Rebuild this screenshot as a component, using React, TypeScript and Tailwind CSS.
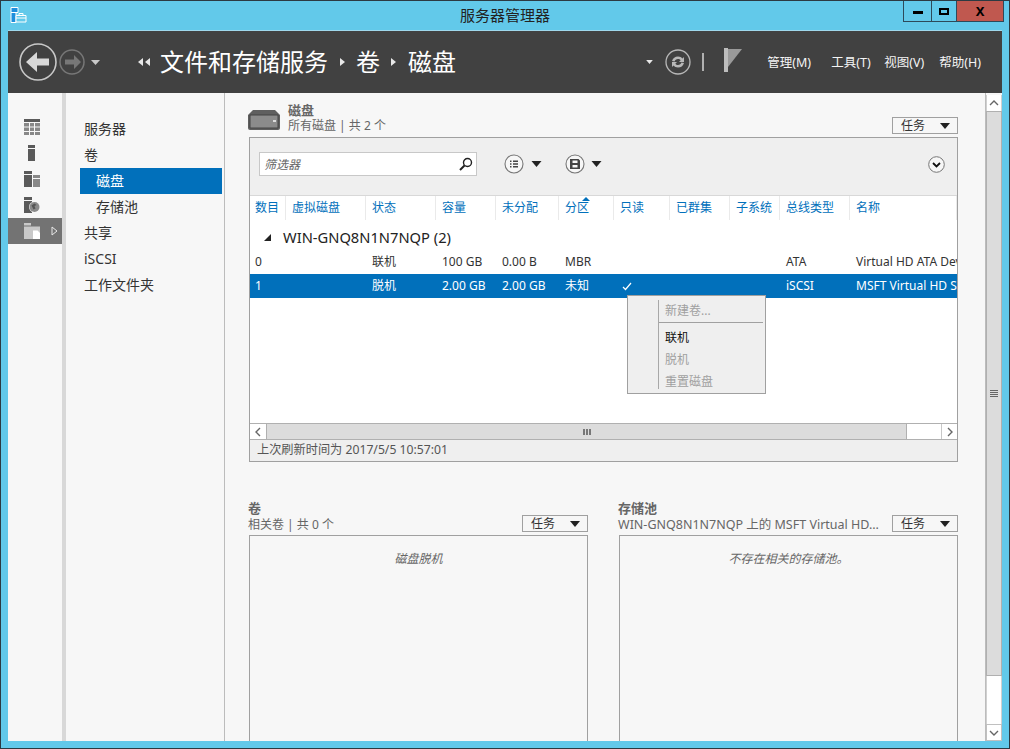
import type { ReactNode } from "react";

const font = { fontFamily: '"Noto Sans", "Noto Sans CJK SC", sans-serif' };

const navItems = [
  { label: "服务器" },
  { label: "卷" },
  { label: "磁盘", sub: true, active: true },
  { label: "存储池", sub: true },
  { label: "共享" },
  { label: "iSCSI" },
  { label: "工作文件夹" },
];

const columns = ["数目", "虚拟磁盘", "状态", "容量", "未分配", "分区", "只读", "已群集", "子系统", "总线类型", "名称"];

const rows = [
  ["0", "", "联机", "100 GB", "0.00 B", "MBR", "", "", "", "ATA", "Virtual HD ATA Device"],
  ["1", "", "脱机", "2.00 GB", "2.00 GB", "未知", "✓", "", "", "iSCSI", "MSFT Virtual HD SCSI Disk Device"],
];

const gridCols = "grid grid-cols-[36px_80px_70px_60px_63px_55px_56px_60px_50px_70px_107px]";

function Triangle({ className }: { className?: string }) {
  return (
    <svg width="10" height="6" viewBox="0 0 10 6" className={className}>
      <path d="M0 0h10L5 6z" fill="currentColor" />
    </svg>
  );
}

function TaskButton() {
  return (
    <div className="flex h-[17px] w-[66px] shrink-0 items-center justify-between border border-[#a0a0a0] bg-[#f7f7f7] pl-[8px] pr-[7px] text-[12px] leading-none text-[#333]">
      <span className="pt-[1px]">任务</span>
      <Triangle className="text-[#222]" />
    </div>
  );
}

function RailIcon({ index }: { index: number }) {
  const c = "#5a5a5a";
  const c2 = "#888";
  if (index === 0)
    return (
      <svg width="16" height="16" viewBox="0 0 16 16">
        <path d="M0 0h16v3H0z" fill={c} />
        <path d="M0 4h5v3.5H0zM6 4h4v3.5H6zM11 4h5v3.5h-5zM0 8.5h5V12H0zM6 8.5h4V12H6zM11 8.5h5V12h-5zM0 13h5v3H0zM6 13h4v3H6zM11 13h5v3h-5z" fill={c2} />
      </svg>
    );
  if (index === 1)
    return (
      <svg width="16" height="16" viewBox="0 0 16 16">
        <path d="M4 0h7v3H4z" fill={c} />
        <path d="M4 4h7v12H4z" fill={c} />
      </svg>
    );
  if (index === 2)
    return (
      <svg width="16" height="16" viewBox="0 0 16 16">
        <path d="M0 0h8v3H0zM0 4h8v12H0z" fill={c} />
        <path d="M9 4h7v3H9zM9 8h7v8H9z" fill={c2} />
      </svg>
    );
  if (index === 3)
    return (
      <svg width="16" height="16" viewBox="0 0 16 16">
        <path d="M0 0h8v3H0zM0 4h8v12H0z" fill={c} />
        <circle cx="10.5" cy="10" r="5.5" fill="#f7f7f7" />
        <circle cx="10.5" cy="10" r="5" fill="#8a8a8a" />
        <path d="M7.5 8.5l3-2 2 1.5-2 1 1 2.5-2 1-1-2z" fill="#555" />
      </svg>
    );
  return (
    <svg width="16" height="16" viewBox="0 0 16 16">
      <path d="M0 0h7v2.5H0zM0 3.5h16V16H0z" fill="#c8c8c8" />
      <path d="M9 7.5h4.5L16 10v6H9z" fill="#fff" />
    </svg>
  );
}

function CircleBtn({ children, size = 20 }: { children: ReactNode; size?: number }) {
  return (
    <svg width={size} height={size} viewBox="0 0 20 20">
      <circle cx="10" cy="10" r="9" fill="#f7f7f7" stroke="#777" strokeWidth="1.1" />
      {children}
    </svg>
  );
}

function ScrollChevron({ dir }: { dir: "up" | "down" | "left" | "right" }) {
  const d = {
    up: "M1 6l4-4 4 4",
    down: "M1 2l4 4 4-4",
    left: "M7 1L3 5l4 4",
    right: "M3 1l4 4-4 4",
  }[dir];
  const box = dir === "up" || dir === "down" ? "0 0 10 8" : "0 0 10 10";
  return (
    <svg width="10" height={dir === "up" || dir === "down" ? 8 : 10} viewBox={box}>
      <path d={d} fill="none" stroke="#666" strokeWidth="1.4" />
    </svg>
  );
}

function Header() {
  return (
    <div className="flex h-[62px] shrink-0 items-center bg-[#414141] text-white">
      <svg width="94" height="40" viewBox="0 0 94 40" className="ml-[10px] shrink-0">
        <circle cx="20" cy="20" r="18" fill="none" stroke="#c8c8c8" strokeWidth="1.6" />
        <path d="M8 20L19 10v6.5h12v7H19V30z" fill="#d8d8d8" />
        <circle cx="54" cy="20" r="12" fill="none" stroke="#777" strokeWidth="1.5" />
        <path d="M63 20l-7-7v4.5h-9v5h9V27z" fill="#777" />
        <path d="M73 18h9l-4.5 5z" fill="#c8c8c8" />
      </svg>
      <div className="ml-[26px] flex items-center">
        <svg width="12" height="8" viewBox="0 0 12 8" className="mr-[10px]">
          <path d="M5 0v8L0 4zM12 0v8L7 4z" fill="#e8e8e8" />
        </svg>
        <span className="text-[24px] leading-none">文件和存储服务</span>
        <svg width="5" height="8" viewBox="0 0 5 8" className="ml-[12px] mr-[11px]">
          <path d="M0 0v8l5-4z" fill="#e8e8e8" />
        </svg>
        <span className="text-[24px] leading-none">卷</span>
        <svg width="5" height="8" viewBox="0 0 5 8" className="ml-[11px] mr-[12px]">
          <path d="M0 0v8l5-4z" fill="#e8e8e8" />
        </svg>
        <span className="text-[24px] leading-none">磁盘</span>
      </div>
      <div className="ml-auto flex items-center pr-[21px]">
        <Triangle className="mr-[12px] h-[4px] w-[7px] text-[#e8e8e8]" />
        <svg width="26" height="26" viewBox="0 0 26 26" className="mr-[11px]">
          <circle cx="13" cy="13" r="12" fill="none" stroke="#b8b8b8" strokeWidth="1.3" />
          <path d="M7 12c1-3 3-4.5 6-4.5 2 0 3.5.8 4.5 2l1.5-1.5v5h-5l1.7-1.7c-.7-.8-1.6-1.3-2.7-1.3-1.7 0-3 1-3.4 2.5zM19 14c-1 3-3 4.5-6 4.5-2 0-3.5-.8-4.5-2L7 18v-5h5l-1.7 1.7c.7.8 1.6 1.3 2.7 1.3 1.7 0 3-1 3.4-2.5z" fill="#b8b8b8" />
        </svg>
        <div className="mr-[20px] h-[18px] w-[2px] bg-[#b0b0b0]" />
        <svg width="18" height="24" viewBox="0 0 18 24" className="mb-[4px] mr-[25px]">
          <path d="M0 0h4v24H0z" fill="#bdbdbd" />
          <path d="M4 1h14L4 19z" fill="#9a9a9a" />
        </svg>
        <div className="flex items-center pt-[2px] text-[12.5px] leading-none text-[#f4f4f4]">
          <span className="w-[64px]">管理(M)</span>
          <span className="w-[53px]">工具(T)</span>
          <span className="w-[55px]">视图(V)</span>
          <span>帮助(H)</span>
        </div>
      </div>
    </div>
  );
}

function Rail() {
  return (
    <div className="flex w-[54px] shrink-0 flex-col bg-[#f7f7f7] pt-[21px]">
      {[0, 1, 2, 3, 4].map((i) => (
        <div key={i} className={`flex h-[26px] items-center pl-[16px] ${i === 4 ? "bg-[#737373]" : ""}`}>
          <RailIcon index={i} />
          {i === 4 && (
            <svg width="7" height="10" viewBox="0 0 7 10" className="ml-[11px]">
              <path d="M1 1l5 4-5 4z" fill="none" stroke="#e8e8e8" strokeWidth="1" />
            </svg>
          )}
        </div>
      ))}
    </div>
  );
}

function Nav() {
  return (
    <div className="flex w-[159px] shrink-0 flex-col border-r border-[#bcbcbc] bg-[#f7f7f7] pl-[14px] pr-[2px] pt-[23px]">
      {navItems.map((item) => (
        <div
          key={item.label}
          className={`flex h-[26px] items-center text-[14px] leading-none ${item.sub ? "pl-[16px]" : "pl-[4px]"} ${
            item.active ? "bg-[#0170bb] text-white" : "text-[#333]"
          }`}
        >
          {item.label}
        </div>
      ))}
    </div>
  );
}

function ContextMenu() {
  const disabled = "flex h-[22px] items-center pl-[6px] text-[#a0a0a0]";
  return (
    <div className="absolute left-[377px] top-[157px] flex h-[99px] w-[139px] border border-[#a0a0a0] bg-[#efefef] py-[4px] text-[12px] leading-none">
      <div className="w-[31px] shrink-0 border-r border-[#a8a8a8]" />
      <div className="flex-1 pr-[2px]">
        <div className="flex h-[22px] items-center pl-[6px] text-[#a0a0a0]">新建卷...</div>
        <div className="mb-[4px] border-b border-[#a0a0a0]" />
        <div className="flex h-[22px] items-center pl-[6px] text-[#111]">联机</div>
        <div className={disabled}>脱机</div>
        <div className={disabled}>重置磁盘</div>
      </div>
    </div>
  );
}

function DiskTable() {
  return (
    <div className="relative flex h-[325px] flex-col border border-[#a0a0a0] bg-white">
      <div className="flex h-[57px] shrink-0 items-center bg-[#efefef] pb-[5px] pl-[9px] pr-[12px]">
        <div className="flex h-[24px] w-[218px] items-center justify-between border border-[#c8c8c8] bg-white pl-[4px] pr-[3px] text-[12px] italic leading-none text-[#666]">
          <span className="pt-[1px]">筛选器</span>
          <svg width="14" height="14" viewBox="0 0 14 14">
            <circle cx="8.5" cy="5.5" r="4" fill="none" stroke="#222" strokeWidth="1.4" />
            <path d="M5.5 8.5L1 13" stroke="#222" strokeWidth="2" />
          </svg>
        </div>
        <div className="ml-[27px] flex items-center">
          <CircleBtn>
            <path d="M6 6.5h1.5V8H6zM6 9.3h1.5v1.5H6zM6 12h1.5v1.5H6zM9 6.5h5V8H9zM9 9.3h5v1.5H9zM9 12h5v1.5H9z" fill="#444" />
          </CircleBtn>
          <Triangle className="ml-[7px] h-[6px] w-[11px] text-[#222]" />
        </div>
        <div className="ml-[23px] flex items-center">
          <CircleBtn>
            <path d="M5 5h8.5L15 6.5V15H5zM7.5 6.5v2.5h5V6.5zM7.5 11v2.5h5V11z" fill="#444" fillRule="evenodd" />
          </CircleBtn>
          <Triangle className="ml-[6px] h-[6px] w-[11px] text-[#222]" />
        </div>
        <div className="ml-auto">
          <svg width="17" height="17" viewBox="0 0 17 17">
            <circle cx="8.5" cy="8.5" r="7.8" fill="#f7f7f7" stroke="#777" />
            <path d="M5 7l3.5 3.5L12 7" fill="none" stroke="#111" strokeWidth="1.8" />
          </svg>
        </div>
      </div>

      <div className={`${gridCols} relative h-[25px] shrink-0 border-t border-[#d8d8d8] text-[12px] leading-none text-[#0170bb]`}>
        {columns.map((c) => (
          <div key={c} className="flex items-center border-r border-[#eaeaea] pl-[6px] first:pl-[5px] last:border-r-0">
            {c}
          </div>
        ))}
        <svg width="8" height="4" viewBox="0 0 8 4" className="absolute left-[332px] top-[1px]">
          <path d="M4 0l4 4H0z" fill="#0170bb" />
        </svg>
      </div>

      <div className="flex h-[30px] shrink-0 items-end pb-[2px] pl-[14px] text-[14.7px] leading-[22px] text-[#222]">
        <svg width="7" height="7" viewBox="0 0 7 7" className="mb-[7px] mr-[12px]">
          <path d="M7 0v7H0z" fill="#222" />
        </svg>
        <span>WIN-GNQ8N1N7NQP (2)</span>
      </div>

      {rows.map((row, i) => (
        <div
          key={row[0]}
          className={`${gridCols} h-[24px] shrink-0 overflow-hidden whitespace-nowrap text-[12px] leading-none ${
            i === 1 ? "bg-[#0170bb] text-white" : "text-[#333]"
          }`}
        >
          {row.map((cell, j) => (
            <div key={j} className="flex items-center overflow-hidden pl-[6px] first:pl-[5px]">
              {cell === "✓" ? (
                <svg width="10" height="9" viewBox="0 0 10 9" className="ml-[2px]">
                  <path d="M1 5l2.5 2.5L9 1" fill="none" stroke="#fff" strokeWidth="1.2" />
                </svg>
              ) : (
                cell
              )}
            </div>
          ))}
        </div>
      ))}

      <div className="flex-1" />

      <div className="flex h-[17px] shrink-0 border-y border-[#b0b0b0] bg-[#dcdcdc]">
        <div className="flex w-[17px] items-center justify-center border-r border-[#b0b0b0] bg-white">
          <ScrollChevron dir="left" />
        </div>
        <div className="flex w-[640px] items-center justify-center border-r border-[#b0b0b0]">
          <div className="h-[6px] w-[8px] border-x-2 border-[#777] bg-[linear-gradient(90deg,#dcdcdc_35%,#777_35%,#777_65%,#dcdcdc_65%)]" />
        </div>
        <div className="flex-1 bg-white" />
        <div className="flex w-[16px] items-center justify-center border-l border-[#c8c8c8] bg-white">
          <ScrollChevron dir="right" />
        </div>
      </div>
      <div className="flex h-[21px] shrink-0 items-center bg-[#efefef] pl-[7px] text-[12.2px] leading-none text-[#555]">
        上次刷新时间为 2017/5/5 10:57:01
      </div>

      <ContextMenu />
    </div>
  );
}

function LowerPanel({ title, sub, empty, wide }: { title: string; sub: string; empty: string; wide?: boolean }) {
  return (
    <div className="flex min-w-0 flex-col">
      <div className="flex h-[35px] items-end justify-between gap-[8px] pb-[3px]">
        <div className="min-w-0 text-[#666]">
          <div className="text-[13px] font-bold leading-[17px]">{title}</div>
          <div className={`whitespace-nowrap leading-[15px] ${wide ? "text-[12.5px]" : "text-[12px]"}`}>{sub}</div>
        </div>
        <TaskButton />
      </div>
      <div className="ml-[1px] h-[260px] border border-[#a0a0a0] bg-[#f7f7f7] pt-[17px] text-center text-[12px] italic leading-none text-[#666]">
        {empty}
      </div>
    </div>
  );
}

function Scrollbar() {
  return (
    <div className="flex w-[17px] shrink-0 flex-col border-l border-[#bcbcbc] bg-[#f7f7f7] pt-[2px]">
      <div className="flex h-[16px] shrink-0 items-center justify-center border-x border-[#d0d0d0] bg-white">
        <ScrollChevron dir="up" />
      </div>
      <div className="flex h-[565px] shrink-0 flex-col items-center justify-center gap-[1px] border border-[#b0b0b0] bg-[#dcdcdc]">
        <div className="h-[1px] w-[8px] bg-[#666]" />
        <div className="h-[1px] w-[8px] bg-[#666]" />
        <div className="h-[1px] w-[8px] bg-[#666]" />
        <div className="h-[1px] w-[8px] bg-[#666]" />
      </div>
      <div className="flex-1 border-x border-[#d0d0d0] bg-white" />
      <div className="flex h-[17px] shrink-0 items-center justify-center border border-[#c0c0c0] bg-white">
        <ScrollChevron dir="down" />
      </div>
    </div>
  );
}

export default function App() {
  return (
    <div style={font} className="flex h-[749px] w-[1010px] flex-col overflow-hidden border border-[#2c3a42] bg-[#62c9ea]">
      <div className="grid h-[29px] shrink-0 grid-cols-[1fr_auto_1fr] items-start">
        <div className="pl-[9px] pt-[6px]">
          <svg width="17" height="16" viewBox="0 0 17 16">
            <path d="M1 .5h7v5H1zM1 5.5h5v10H1z" fill="#1e8fdc" stroke="#fff" strokeWidth="1" />
            <path d="M6 8.5h10v6.5H6z" fill="#62c9ea" stroke="#fff" strokeWidth="1" />
            <path d="M9 8.5V6.5h4v2M6 11h10" fill="none" stroke="#fff" strokeWidth="1" />
          </svg>
        </div>
        <div className="pt-[7px] text-[15px] leading-none text-[#222]">服务器管理器</div>
        <div className="flex justify-end pr-[5px]">
          <div className="flex h-[21px] border-x border-b border-[#2d4a5a]">
            <div className="flex w-[28px] items-center justify-center border-r border-[#2d4a5a]">
              <div className="mt-[3px] h-[3px] w-[10px] bg-black" />
            </div>
            <div className="flex w-[25px] items-center justify-center border-r border-[#2d4a5a]">
              <div className="h-[7px] w-[10px] border-2 border-black" />
            </div>
            <div className="flex w-[46px] items-center justify-center bg-[#c0584f] text-[13px] font-bold leading-none text-black">
              X
            </div>
          </div>
        </div>
      </div>

      <div className="mx-[7px] mb-[7px] flex min-h-0 flex-1 flex-col border-t border-[#9fd8ec]">
        <Header />
        <div className="flex min-h-0 flex-1">
          <Rail />
          <div className="w-[4px] shrink-0 bg-[#d8d8d8]" />
          <Nav />
          <div className="min-w-0 flex-1 overflow-hidden bg-[#f7f7f7] pl-[24px] pr-[27px]">
            <div className="flex h-[44px] items-end justify-between pb-[3px]">
              <div className="flex items-center">
                <svg width="32" height="20" viewBox="0 0 32 20" className="-ml-[1px] mr-[8px] mt-[3px]">
                  <path d="M5 0h22l5 5v13a2 2 0 0 1-2 2H2a2 2 0 0 1-2-2V5z" fill="#5f5f5f" />
                  <path d="M2 5h28v13H2z" fill="#8b8b8b" stroke="#444" strokeWidth="1" />
                  <path d="M25 10h3v2h-3z" fill="#ddd" />
                </svg>
                <div className="text-[#666]">
                  <div className="text-[13px] font-bold leading-[16px]">磁盘</div>
                  <div className="text-[12px] leading-[16px]">所有磁盘 | 共 2 个</div>
                </div>
              </div>
              <TaskButton />
            </div>
            <DiskTable />
            <div className="-ml-[1px] mt-[38px] grid grid-cols-[340px_340px] gap-x-[30px]">
              <LowerPanel title="卷" sub="相关卷 | 共 0 个" empty="磁盘脱机" />
              <LowerPanel
                title="存储池"
                sub="WIN-GNQ8N1N7NQP 上的 MSFT Virtual HD..."
                empty="不存在相关的存储池。"
                wide
              />
            </div>
          </div>
          <Scrollbar />
        </div>
      </div>
    </div>
  );
}
